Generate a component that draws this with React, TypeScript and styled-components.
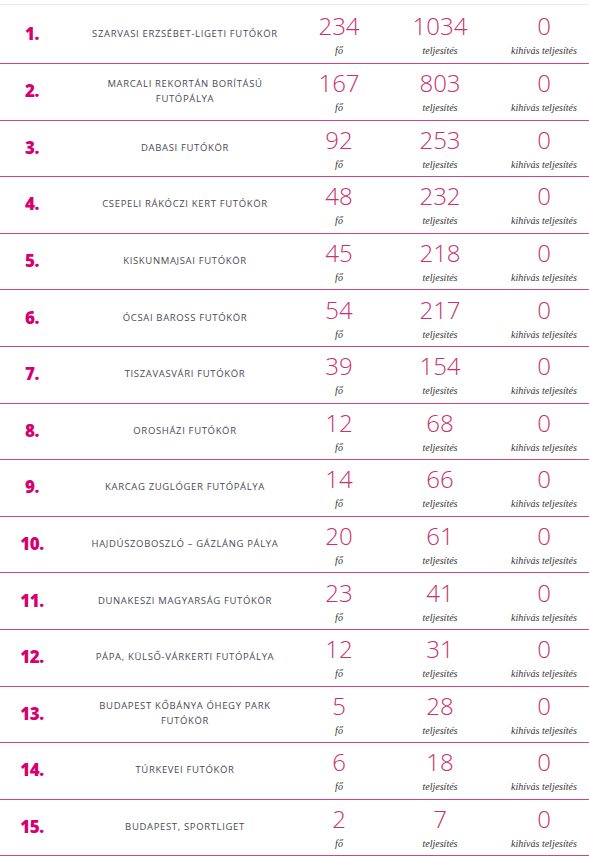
import React from "react";
import styled, { createGlobalStyle } from "styled-components";

const Global = createGlobalStyle`
  html, body { margin: 0; padding: 0; background: #fff; }
  body { font-family: "Open Sans", "DejaVu Sans", sans-serif; }
`;

const Table = styled.div`
  width: 589px;
  padding-top: 4px;
`;

const Top = styled.div`
  height: 1px;
  background: #ececec;
`;

const Row = styled.div<{ $first?: boolean }>`
  box-sizing: border-box;
  display: grid;
  grid-template-columns: 64px 242px 66px 136px 72px 1fr;
  align-items: center;
  height: ${(p) => (p.$first ? "59px" : "56.6px")};
  padding-bottom: 2px;
  border-bottom: 1px solid #c94a80;
`;

const Rank = styled.div`
  text-align: center;
  font-family: "Open Sans", sans-serif;
  font-weight: 800;
  font-size: 17px;
  color: #d6006f;
  letter-spacing: -0.5px;
`;

const Name = styled.div`
  text-align: center;
  padding: 0 22px;
  font-family: "Open Sans", sans-serif;
  font-size: 9.5px;
  letter-spacing: 0.65px;
  line-height: 15px;
  color: #4a4a55;
  text-transform: uppercase;
`;

const Stat = styled.div`
  display: flex;
  flex-direction: column;
  align-items: center;
  white-space: nowrap;
  padding-top: 3px;
`;

const Value = styled.div`
  font-family: "Open Sans", sans-serif;
  font-weight: 300;
  font-size: 24px;
  line-height: 28px;
  color: #c8336f;
`;

const Label = styled.div`
  font-family: "Liberation Serif", serif;
  font-style: italic;
  font-size: 10px;
  line-height: 14px;
  color: #333;
  margin-top: 4px;
`;

const data: [string, number, number, number][] = [
  ["Szarvasi Erzsébet-ligeti futókör", 234, 1034, 0],
  ["Marcali rekortán borítású futópálya", 167, 803, 0],
  ["Dabasi futókör", 92, 253, 0],
  ["Csepeli Rákóczi kert futókör", 48, 232, 0],
  ["Kiskunmajsai futókör", 45, 218, 0],
  ["Ócsai Baross futókör", 54, 217, 0],
  ["Tiszavasvári futókör", 39, 154, 0],
  ["Orosházi futókör", 12, 68, 0],
  ["Karcag Zuglóger futópálya", 14, 66, 0],
  ["Hajdúszoboszló – Gázláng pálya", 20, 61, 0],
  ["Dunakeszi Magyarság futókör", 23, 41, 0],
  ["Pápa, Külső-várkerti futópálya", 12, 31, 0],
  ["Budapest Kőbánya Óhegy park futókör", 5, 28, 0],
  ["Túrkevei futókör", 6, 18, 0],
  ["Budapest, Sportliget", 2, 7, 0],
];

export default function App() {
  return (
    <>
      <Global />
      <Table>
        <Top />
        {data.map(([name, a, b, c], i) => (
          <Row key={i} $first={i === 0}>
            <Rank>{i + 1}.</Rank>
            <Name>{name}</Name>
            <Stat>
              <Value>{a}</Value>
              <Label>fő</Label>
            </Stat>
            <Stat>
              <Value>{b}</Value>
              <Label>teljesítés</Label>
            </Stat>
            <Stat>
              <Value>{c}</Value>
              <Label>kihívás teljesítés</Label>
            </Stat>
            <div />
          </Row>
        ))}
      </Table>
    </>
  );
}
